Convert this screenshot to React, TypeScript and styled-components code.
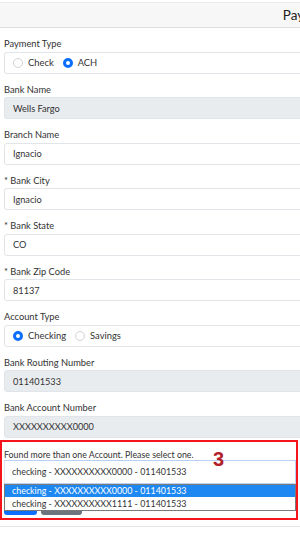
import React from "react";
import styled, { createGlobalStyle } from "styled-components";

const GlobalStyle = createGlobalStyle`
  html, body {
    margin: 0;
    padding: 0;
    background: #ffffff;
    overflow: hidden;
  }
  body {
    font-family: Lato, "Open Sans", sans-serif;
    color: #333;
  }
  * {
    box-sizing: border-box;
  }
`;

const Page = styled.div`
  width: 662px;
  padding-top: 2px;
`;

const Header = styled.div`
  height: 26px;
  background: #f7f7f7;
  border-top: 1px solid #ececec;
  border-bottom: 1px solid #dedede;
  display: flex;
  align-items: center;
  justify-content: center;
  font-size: 13.5px;
  color: #222;
`;

const Form = styled.div`
  padding: 9px 0 0 4px;
  display: flex;
  flex-direction: column;
`;

const Field = styled.div`
  display: flex;
  flex-direction: column;
  margin-bottom: 9px;
`;

const Label = styled.label`
  font-size: 9.3px;
  line-height: 14.5px;
  color: #333;
`;

const Input = styled.div<{ $readOnly?: boolean }>`
  height: 22px;
  border: 1px solid #e1e4e8;
  border-radius: 3px;
  background: ${(p) => (p.$readOnly ? "#e9ecef" : "#ffffff")};
  display: flex;
  align-items: center;
  padding-left: 8px;
  font-size: 9.2px;
  color: #333;
`;

const RadioBox = styled.div`
  height: 22px;
  border: 1px solid #e1e4e8;
  border-radius: 3px;
  display: flex;
  align-items: center;
  gap: 9px;
  padding-left: 8px;
  font-size: 9.4px;
  color: #333;
`;

const RadioItem = styled.span`
  display: flex;
  align-items: center;
  gap: 5px;
`;

const Dot = styled.span<{ $checked?: boolean }>`
  width: 10px;
  height: 10px;
  border-radius: 50%;
  border: ${(p) => (p.$checked ? "3px solid #0d6efd" : "1px solid #cfd3d8")};
  background: #fff;
`;

const Highlight = styled.div`
  margin-left: -4px;
  margin-top: -7px;
  width: 298px;
  border: 2.5px solid #f5141c;
  padding: 7px 0 0 2px;
  position: relative;
  overflow: hidden;
  height: 80px;
`;

const Message = styled.div`
  font-size: 8.8px;
  line-height: 11px;
  color: #333;
`;

const Step = styled.span`
  position: absolute;
  left: 211px;
  top: 9px;
  z-index: 3;
  font-size: 20px;
  line-height: 17px;
  font-weight: bold;
  color: #b3202a;
  font-family: "Liberation Sans", sans-serif;
`;

const SelectWrap = styled.div`
  position: relative;
`;

const Select = styled.div`
  height: 24px;
  border: 1px solid #b9d1f3;
  border-left-color: #dfe6ef;
  display: flex;
  align-items: center;
  padding-left: 7px;
  font-size: 8.9px;
  color: #333;
`;

const Options = styled.div`
  position: absolute;
  left: 0;
  right: 0;
  top: 24px;
  background: #fff;
  border: 1px solid #7a7a7a;
  z-index: 2;
`;

const Option = styled.div<{ $active?: boolean }>`
  height: 12.5px;
  display: flex;
  align-items: center;
  padding-left: 7px;
  font-size: 8.9px;
  background: ${(p) => (p.$active ? "#1e88f2" : "#fff")};
  color: ${(p) => (p.$active ? "#fff" : "#333")};
`;

const Buttons = styled.div`
  display: flex;
  gap: 4px;
  margin-top: 5px;
`;

const Button = styled.div<{ $color: string; $w: number }>`
  height: 26px;
  width: ${(p) => p.$w}px;
  background: ${(p) => p.$color};
  border-radius: 3px;
`;

const Footer = styled.div`
  margin-left: -4px;
  margin-top: 6px;
  border-top: 1px solid #e6e6e6;
`;

const fields = [
  { label: "Bank Name", value: "Wells Fargo", readOnly: true },
  { label: "Branch Name", value: "Ignacio" },
  { label: "* Bank City", value: "Ignacio" },
  { label: "* Bank State", value: "CO" },
  { label: "* Bank Zip Code", value: "81137" },
];

function RadioField({ label, options, checked }: { label: string; options: string[]; checked: string }) {
  return (
    <Field>
      <Label>{label}</Label>
      <RadioBox>
        {options.map((o) => (
          <RadioItem key={o}>
            <Dot $checked={o === checked} />
            {o}
          </RadioItem>
        ))}
      </RadioBox>
    </Field>
  );
}

function TextField({ label, value, readOnly }: { label: string; value: string; readOnly?: boolean }) {
  return (
    <Field>
      <Label>{label}</Label>
      <Input $readOnly={readOnly}>{value}</Input>
    </Field>
  );
}

export default function App() {
  return (
    <Page>
      <GlobalStyle />
      <Header>Payment Details</Header>
      <Form>
        <RadioField label="Payment Type" options={["Check", "ACH"]} checked="ACH" />
        {fields.map((f) => (
          <TextField key={f.label} {...f} />
        ))}
        <RadioField label="Account Type" options={["Checking", "Savings"]} checked="Checking" />
        <TextField label="Bank Routing Number" value="011401533" readOnly />
        <TextField label="Bank Account Number" value="XXXXXXXXXX0000" readOnly />

        <Highlight>
          <Step>3</Step>
          <Message>Found more than one Account. Please select one.</Message>
          <SelectWrap>
            <Select>checking - XXXXXXXXXX0000 - 011401533</Select>
            <Options>
              <Option $active>checking - XXXXXXXXXX0000 - 011401533</Option>
              <Option>checking - XXXXXXXXXX1111 - 011401533</Option>
            </Options>
          </SelectWrap>
          <Buttons>
            <Button $color="#0d6efd" $w={33} />
            <Button $color="#6c757d" $w={41} />
          </Buttons>
        </Highlight>
        <Footer />
      </Form>
    </Page>
  );
}
